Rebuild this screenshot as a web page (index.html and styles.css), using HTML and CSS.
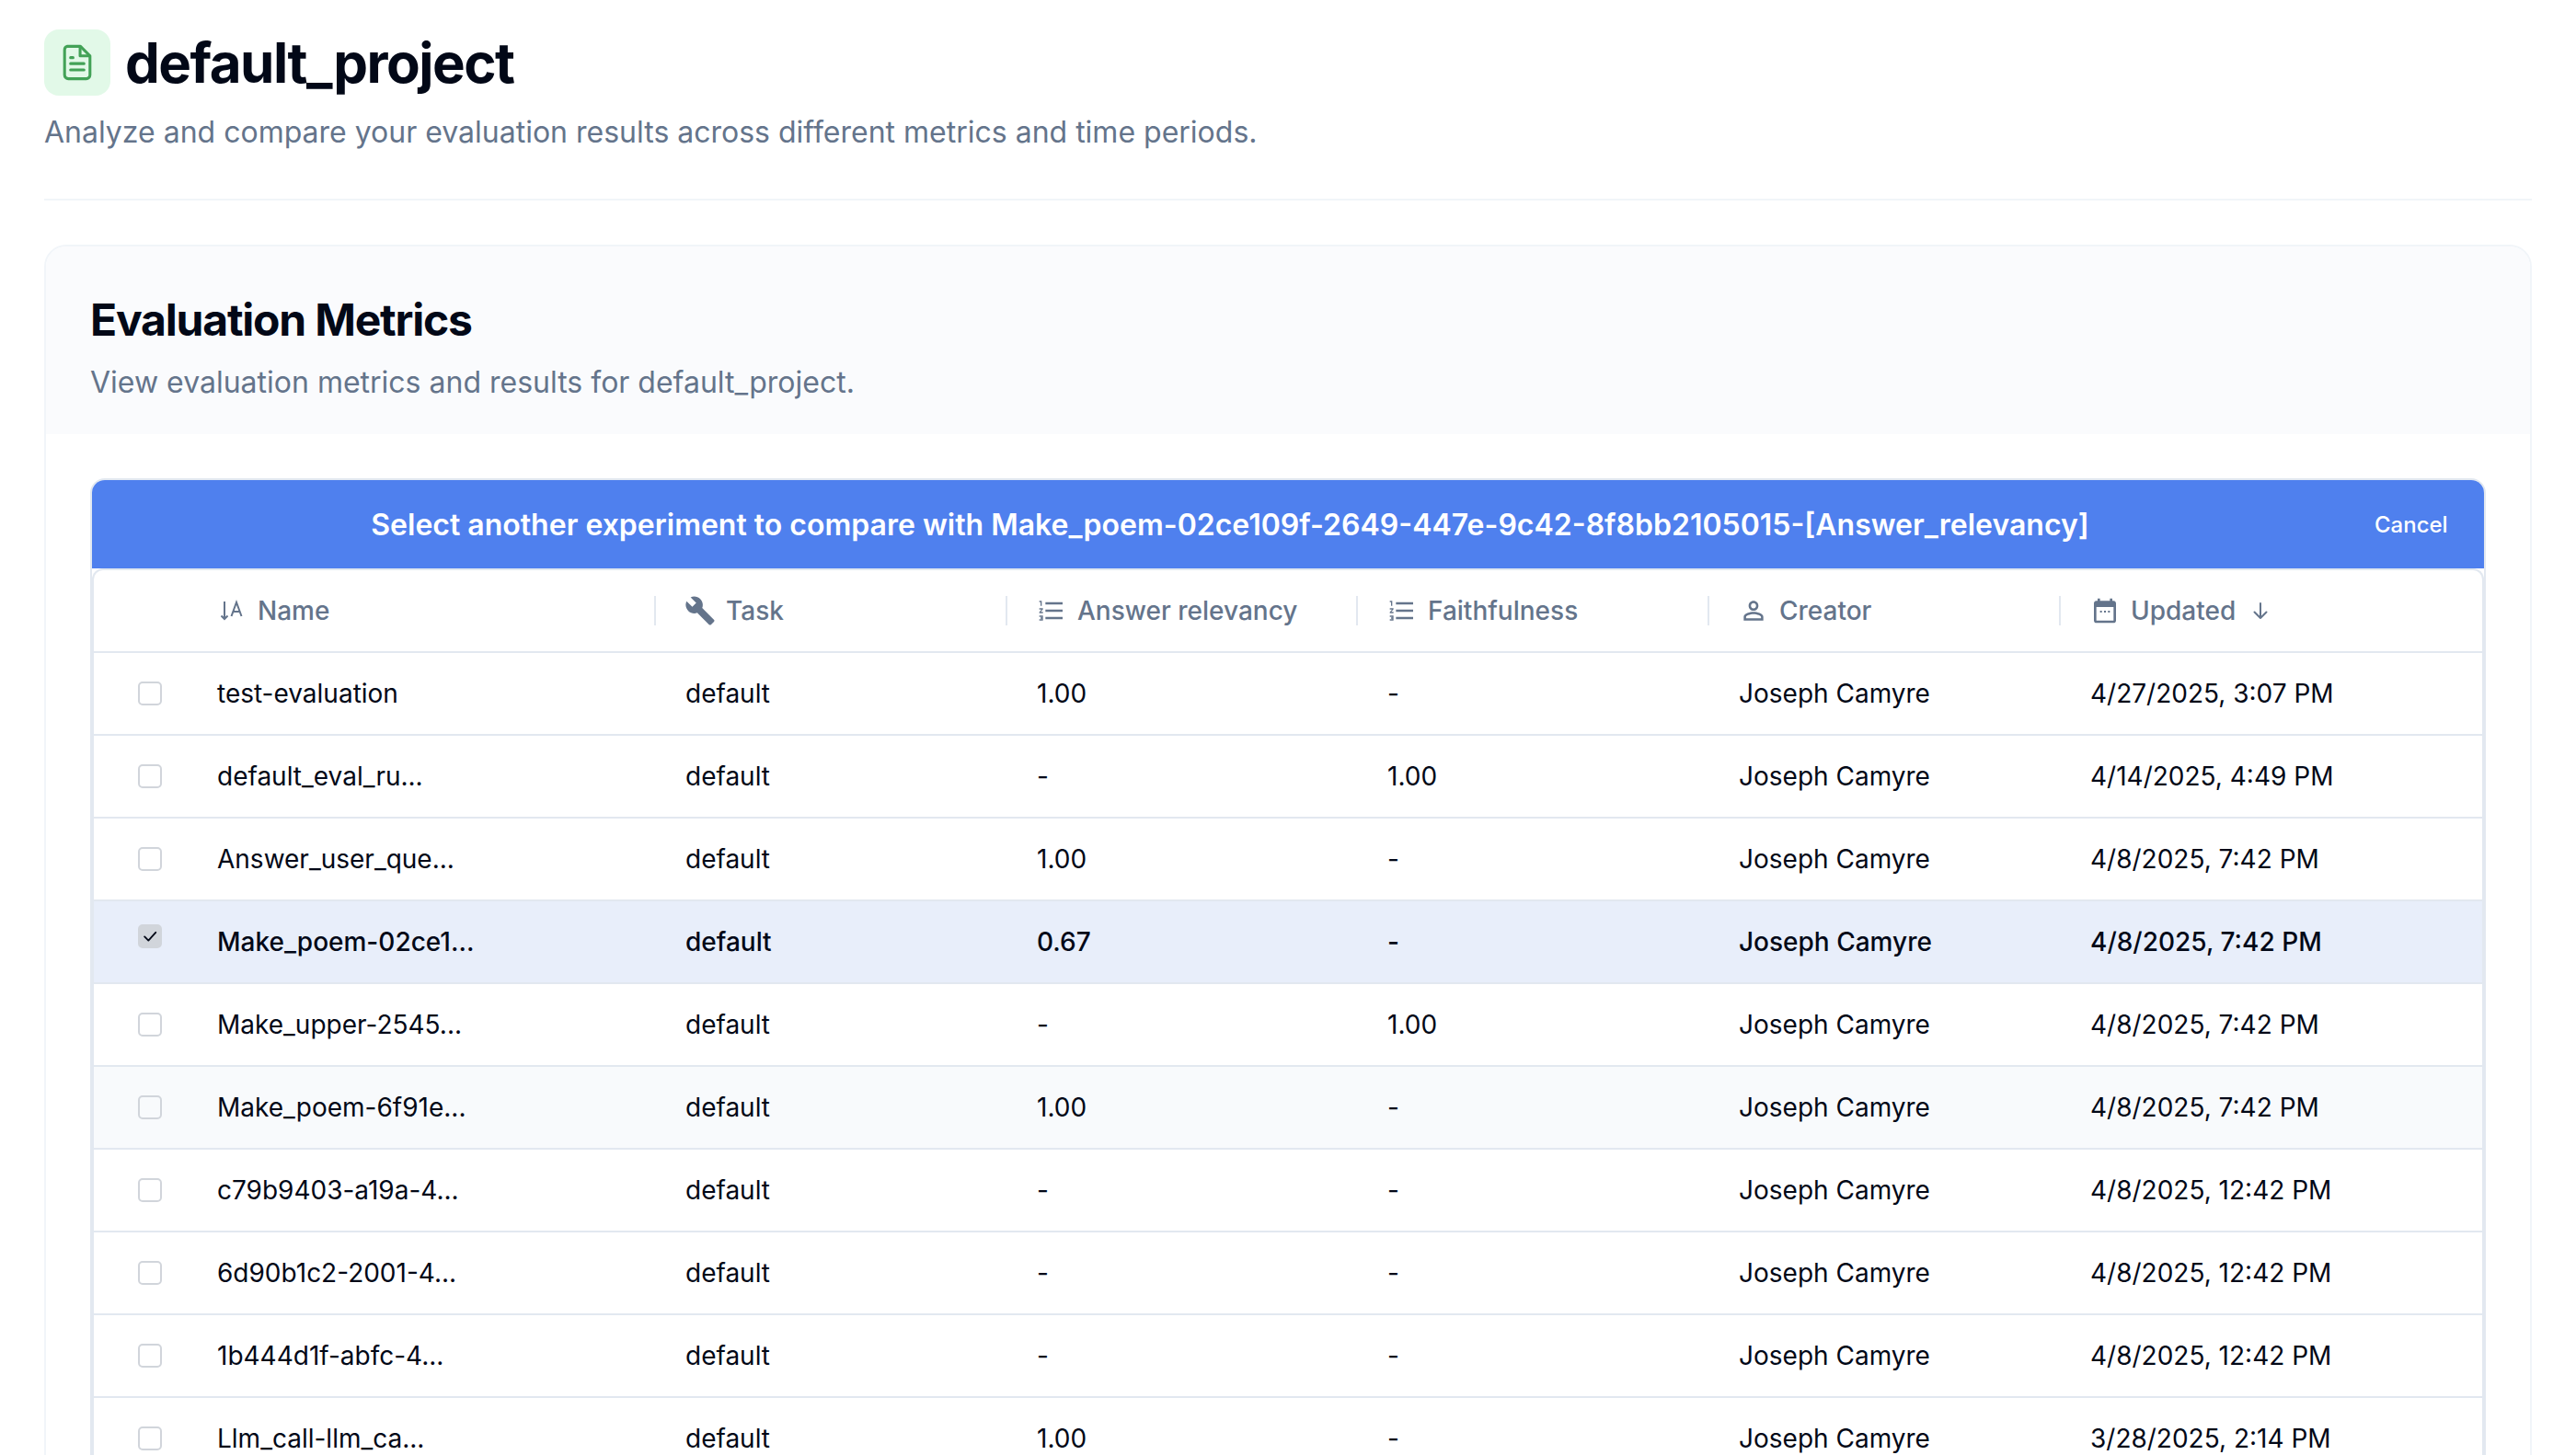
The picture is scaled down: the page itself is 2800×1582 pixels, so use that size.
FILE: index.html
```html
<!DOCTYPE html>
<html lang="en">
<head>
<meta charset="utf-8">
<title>default_project</title>
<link rel="stylesheet" href="styles.css">
</head>
<body>
<svg class="defs" width="0" height="0" aria-hidden="true">
  <symbol id="i-list" viewBox="0 0 24 24"><path fill="currentColor" d="M2 17h2v.5H3v1h1v.5H2v1h3v-4H2zm1-9h1V4H2v1h1v3zm-1 3h1.8L2 13.1v.9h3v-1H3.2L5 10.9V10H2v1zm5-6v2h14V5H7zm0 14h14v-2H7v2zm0-6h14v-2H7v2z"/></symbol>
</svg>
<main class="page">
  <header class="page-head">
    <div class="title-row">
      <span class="title-icon">
        <svg class="doc-icon" viewBox="0 0 24 24" fill="none" stroke="#43a257" stroke-width="1.6" stroke-linecap="round" stroke-linejoin="round">
          <path d="M6.2 2.8h7.6L19.2 8.2v10.9a2.1 2.1 0 0 1-2.1 2.1H6.9a2.1 2.1 0 0 1-2.1-2.1V4.9a2.1 2.1 0 0 1 1.4-2.1z"/>
          <path d="M13.6 3v5.2h5.4"/>
          <path d="M8.2 9.200h1.400M8.2 12.600h7.600M8.2 16.200h7.600"/>
        </svg>
      </span>
      <h1 class="title">default_project</h1>
    </div>
    <p class="subtitle">Analyze and compare your evaluation results across different metrics and time periods.</p>
  </header>

  <section class="card">
    <div class="card-head">
      <h2 class="card-title">Evaluation Metrics</h2>
      <p class="subtitle card-sub">View evaluation metrics and results for default_project.</p>
    </div>
    <div class="card-body">
      <div class="table-frame">
        <div class="banner">
          <span class="banner-text">Select another experiment to compare with Make_poem-02ce109f-2649-447e-9c42-8f8bb2105015-[Answer_relevancy]</span>
          <button class="cancel" type="button">Cancel</button>
        </div>
        <div class="table">
          <div class="row head">
            <div class="cell"></div>
            <div class="cell th sep">
              <svg class="ic" viewBox="0 0 32 32" fill="none" stroke="currentColor" stroke-width="2"><path d="M8 6v19M4.500 21.500 8 25l3.500-3.500"/><path d="M15.500 22 21 7 26.500 22M17.500 17h7"/></svg>
              <span>Name</span>
            </div>
            <div class="cell th sep">
              <svg class="ic wrench" viewBox="0 0 24 24"><path fill="currentColor" d="M22.700 19l-9.100-9.100c.9-2.300.4-5-1.500-6.900-2-2-5-2.400-7.400-1.300L9 6 6 9 1.600 4.700C.4 7.100.9 10.100 2.900 12.100c1.900 1.900 4.600 2.400 6.900 1.500l9.100 9.100c.4.4 1 .4 1.400 0l2.300-2.300c.5-.4.5-1.100.1-1.400z"/></svg>
              <span>Task</span>
            </div>
            <div class="cell th sep"><svg class="ic"><use href="#i-list"/></svg><span>Answer relevancy</span></div>
            <div class="cell th sep"><svg class="ic"><use href="#i-list"/></svg><span>Faithfulness</span></div>
            <div class="cell th sep">
              <svg class="ic" viewBox="0 0 24 24"><path fill="currentColor" d="M12 5.900c1.160 0 2.100.94 2.100 2.100s-.94 2.100-2.100 2.100S9.900 9.160 9.900 8s.94-2.100 2.100-2.100m0 9c2.970 0 6.100 1.460 6.100 2.100v1.100H5.900V17c0-.64 3.130-2.100 6.100-2.100M12 4C9.790 4 8 5.790 8 8s1.790 4 4 4 4-1.790 4-4-1.790-4-4-4zm0 9c-2.670 0-8 1.340-8 4v3h16v-3c0-2.660-5.330-4-8-4z"/></svg>
              <span>Creator</span>
            </div>
            <div class="cell th">
              <svg class="ic" viewBox="0 0 24 24"><path fill="currentColor" d="M19 4h-1V2h-2v2H8V2H6v2H5c-1.100 0-2 .9-2 2v14c0 1.100.9 2 2 2h14c1.100 0 2-.9 2-2V6c0-1.100-.9-2-2-2zm0 16H5V9h14v11zM8 12h1.500v1.500H8zm3.250 0h1.500v1.500h-1.500zm3.250 0H16v1.500h-1.500z"/></svg>
              <span>Updated</span>
              <svg class="sort-arrow" viewBox="0 0 24 24" fill="none" stroke="currentColor" stroke-width="2" stroke-linecap="round" stroke-linejoin="round"><path d="M12 4v16M5.500 13.500 12 20l6.500-6.500"/></svg>
            </div>
          </div>

          <div class="row"><div class="cell"><span class="check"></span></div><div class="cell name">test-evaluation</div><div class="cell">default</div><div class="cell">1.00</div><div class="cell">-</div><div class="cell">Joseph Camyre</div><div class="cell">4/27/2025, 3:07 PM</div></div>
          <div class="row"><div class="cell"><span class="check"></span></div><div class="cell name">default_eval_ru...</div><div class="cell">default</div><div class="cell">-</div><div class="cell">1.00</div><div class="cell">Joseph Camyre</div><div class="cell">4/14/2025, 4:49 PM</div></div>
          <div class="row"><div class="cell"><span class="check"></span></div><div class="cell name">Answer_user_que...</div><div class="cell">default</div><div class="cell">1.00</div><div class="cell">-</div><div class="cell">Joseph Camyre</div><div class="cell">4/8/2025, 7:42 PM</div></div>
          <div class="row selected"><div class="cell"><span class="check on"><svg viewBox="0 0 24 24" fill="none" stroke="#020817" stroke-width="2.200" stroke-linecap="round" stroke-linejoin="round"><path d="M5 12.500 10 17.500 19.500 7"/></svg></span></div><div class="cell name">Make_poem-02ce1...</div><div class="cell">default</div><div class="cell">0.67</div><div class="cell">-</div><div class="cell">Joseph Camyre</div><div class="cell">4/8/2025, 7:42 PM</div></div>
          <div class="row"><div class="cell"><span class="check"></span></div><div class="cell name">Make_upper-2545...</div><div class="cell">default</div><div class="cell">-</div><div class="cell">1.00</div><div class="cell">Joseph Camyre</div><div class="cell">4/8/2025, 7:42 PM</div></div>
          <div class="row hovered"><div class="cell"><span class="check"></span></div><div class="cell name">Make_poem-6f91e...</div><div class="cell">default</div><div class="cell">1.00</div><div class="cell">-</div><div class="cell">Joseph Camyre</div><div class="cell">4/8/2025, 7:42 PM</div></div>
          <div class="row"><div class="cell"><span class="check"></span></div><div class="cell name">c79b9403-a19a-4...</div><div class="cell">default</div><div class="cell">-</div><div class="cell">-</div><div class="cell">Joseph Camyre</div><div class="cell">4/8/2025, 12:42 PM</div></div>
          <div class="row"><div class="cell"><span class="check"></span></div><div class="cell name">6d90b1c2-2001-4...</div><div class="cell">default</div><div class="cell">-</div><div class="cell">-</div><div class="cell">Joseph Camyre</div><div class="cell">4/8/2025, 12:42 PM</div></div>
          <div class="row"><div class="cell"><span class="check"></span></div><div class="cell name">1b444d1f-abfc-4...</div><div class="cell">default</div><div class="cell">-</div><div class="cell">-</div><div class="cell">Joseph Camyre</div><div class="cell">4/8/2025, 12:42 PM</div></div>
          <div class="row"><div class="cell"><span class="check"></span></div><div class="cell name">Llm_call-llm_ca...</div><div class="cell">default</div><div class="cell">1.00</div><div class="cell">-</div><div class="cell">Joseph Camyre</div><div class="cell">3/28/2025, 2:14 PM</div></div>
        </div>
      </div>
    </div>
  </section>
</main>
</body>
</html>
```
FILE: styles.css
```css
* { box-sizing: border-box; }
html, body { height: 100%; }
body {
  margin: 0;
  height: 1582px;
  overflow: hidden;
  background: #ffffff;
  color: #020817;
  font-family: Inter, "Liberation Sans", sans-serif;
}
.defs { display: block; height: 0; }
.page {
  height: 1582px;
  overflow: hidden;
  padding: 32px 48px 0;
}
.page-head {
  padding-bottom: 50px;
  border-bottom: 2px solid #f1f5f9;
  margin-bottom: 48px;
}
.title-row { display: flex; align-items: center; gap: 16px; }
.title-icon {
  width: 72px;
  height: 72px;
  border-radius: 16px;
  background: #e2f9e8;
  display: flex;
  align-items: center;
  justify-content: center;
  flex: none;
}
.doc-icon { width: 46px; height: 46px; display: block; }
.title {
  margin: 0;
  font-size: 60px;
  line-height: 72px;
  font-weight: 700;
  letter-spacing: -1.5px;
}
.subtitle {
  margin: 18px 0 0;
  font-size: 32px;
  line-height: 44px;
  color: #64748b;
}
.card {
  border: 2px solid #f1f5f9;
  border-radius: 24px;
  overflow: hidden;
  background: #fff;
}
.card-head {
  background: #fafbfd;
  padding: 50px 48px 34px;
}
.card-title {
  margin: 0;
  font-size: 48px;
  line-height: 60px;
  font-weight: 700;
  letter-spacing: -1.2px;
}
.card-sub { margin-top: 16px; }
.card-body { padding: 48px; }
.table-frame {
  border: 2px solid #e2e8f0;
  border-radius: 16px;
  overflow: hidden;
  background: #fff;
}
.banner {
  height: 96px;
  display: flex;
  align-items: center;
  color: #fff;
  background: #4f80ee;
}
.banner-text {
  flex: 1;
  text-align: center;
  font-size: 32px;
  font-weight: 600;
}
.cancel {
  width: 126px;
  padding: 0 0 0 7px;
  border: 0;
  background: none;
  color: #fff;
  font-family: inherit;
  font-size: 24px;
  font-weight: 500;
  text-align: left;
}
.table {
  background: #fff;
  border: 2px solid #e2e8f0;
  border-bottom: 0;
  border-radius: 12px 12px 0 0;
}
.row {
  display: grid;
  grid-template-columns: 102px 509px 382px 381px 382px 382px 1fr;
  height: 90px;
  border-bottom: 2px solid #e2e8f0;
  font-size: 28px;
  color: #020817;
}
.cell {
  display: flex;
  align-items: center;
  padding-left: 32px;
  min-width: 0;
  position: relative;
}
.row > .cell:first-child { padding-left: 48px; }
.th { font-weight: 500; color: #64748b; gap: 12px; }
.sep::after {
  content: "";
  position: absolute;
  right: 0;
  top: 28px;
  width: 2px;
  height: 32px;
  background: #e2e8f0;
}
.ic { width: 32px; height: 32px; flex: none; display: block; }
.wrench { width: 34px; height: 34px; margin: 0 -1px; }
.sort-arrow { width: 24px; height: 24px; margin-left: 3px; flex: none; }
.check {
  width: 26px;
  height: 26px;
  border: 2px solid #d1d5db;
  border-radius: 5px;
  background: #fff;
  display: block;
  flex: none;
}
.hovered .check { background: #f8fafc; }
.check.on {
  background: #d1d5db;
  margin-bottom: 12px;
  padding: 1px;
}
.check svg { width: 100%; height: 100%; display: block; }
.selected { background: #e8eefa; font-weight: 500; }
.hovered { background: #f8fafc; }
```
